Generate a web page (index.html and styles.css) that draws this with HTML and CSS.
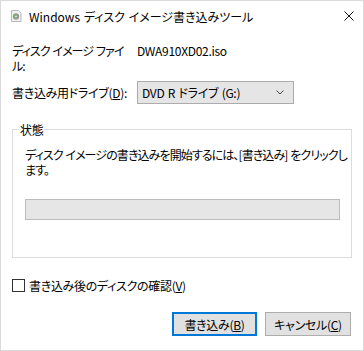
FILE: index.html
```html
<!DOCTYPE html>
<html lang="ja">
<head>
  <meta charset="UTF-8" />
  <title>Windows ディスク イメージ書き込みツール</title>
  <link rel="stylesheet" href="styles.css">
</head>
<body>
  <div class="window">
    <div class="titlebar">
      <svg class="app-icon" width="12" height="12" viewBox="0 0 12 12">
        <path d="M1.5 0.5h7l2.5 2.5v8.5h-9.5z" fill="#f2f2f2" stroke="#b8b8b8" />
        <circle cx="6" cy="6.5" r="3.2" fill="#9a9a9a" />
        <circle cx="5.2" cy="5.8" r="1.6" fill="#7fb06a" />
        <circle cx="6" cy="6.5" r="0.8" fill="#f2f2f2" />
      </svg>
      <span class="title">Windows ディスク イメージ書き込みツール</span>
      <svg class="close" width="10" height="10" viewBox="0 0 10 10">
        <path d="M0.5 0.5l9 9M9.5 0.5l-9 9" stroke="#111" stroke-width="1" />
      </svg>
    </div>

    <div class="content">
      <div class="row file-row">
        <div class="label">ディスク イメージ ファイル:</div>
        <div class="value">DWA910XD02.iso</div>
      </div>

      <div class="row drive-row">
        <div class="label">書き込み用ドライブ(<u>D</u>):</div>
        <div class="combo">
          <span>DVD R ドライブ (G:)</span>
          <svg width="8" height="5" viewBox="0 0 8 5">
            <path d="M0.5 0.5l3.5 3.5l3.5-3.5" fill="none" stroke="#444" stroke-width="1" />
          </svg>
        </div>
      </div>

      <fieldset class="status">
        <legend>状態</legend>
        <p class="status-text">ディスク イメージの書き込みを開始するには、[書き込み] をクリックします。</p>
        <div class="progress"></div>
      </fieldset>

      <label class="verify">
        <span class="checkbox"></span>
        書き込み後のディスクの確認(<u>V</u>)
      </label>

      <div class="buttons">
        <button class="btn default">書き込み(<u>B</u>)</button>
        <button class="btn">キャンセル(<u>C</u>)</button>
      </div>
    </div>
  </div>
</body>
</html>
```

FILE: styles.css
```css
body {
  margin: 0;
  font-family: "Noto Sans CJK JP", "Noto Sans", sans-serif;
  font-size: 12px;
  line-height: 15px;
  color: #000;
  font-feature-settings: "palt";
  letter-spacing: -0.3px;
  word-spacing: 1px;
}
.window {
  width: 362px;
  height: 349px;
  border: 1px solid #dadada;
  background: #fff;
}
.titlebar {
  height: 30px;
  display: flex;
  align-items: center;
  padding: 0 9px;
}
.app-icon {
  margin-right: 7px;
}
.title {
  flex: 1;
  letter-spacing: 0;
}
.content {
  padding: 12px 11px 0 11px;
}
.row {
  display: flex;
}
.label {
  width: 125px;
}
.file-row .label {
  width: 114px;
  margin-right: 11px;
  letter-spacing: -0.9px;
}
.drive-row {
  margin-top: 8px;
  align-items: center;
}
.combo {
  width: 157px;
  height: 23px;
  border: 1px solid #acacac;
  background: #e5e5e5;
  display: flex;
  align-items: center;
  justify-content: space-between;
  padding: 0 9px 0 4px;
  box-sizing: border-box;
}
.status {
  margin: 18px 0 0 0;
  padding: 10px 11px 37px 12px;
  border: 1px solid #dcdcdc;
}
.status legend {
  margin-left: -6px;
  padding: 0 1px;
}
.status-text {
  margin: 0 -10px 0 0;
  letter-spacing: -0.9px;
}
.progress {
  margin-top: 22px;
  height: 19px;
  border: 1px solid #bcbcbc;
  background: #e6e6e6;
}
.verify {
  display: flex;
  align-items: center;
  margin-top: 20px;
}
.checkbox {
  width: 11px;
  height: 11px;
  border: 1px solid #333;
  margin-right: 4px;
}
.buttons {
  display: flex;
  justify-content: flex-end;
  gap: 8px;
  margin-top: 19px;
  padding-right: 1px;
}
.btn {
  font: inherit;
  font-feature-settings: "palt";
  letter-spacing: -0.3px;
  width: 86px;
  height: 24px;
  padding: 0;
  border: 1px solid #adadad;
  background: #e1e1e1;
  color: #000;
}
.btn.default {
  width: 85px;
  border: 2px solid #0078d7;
}
```
